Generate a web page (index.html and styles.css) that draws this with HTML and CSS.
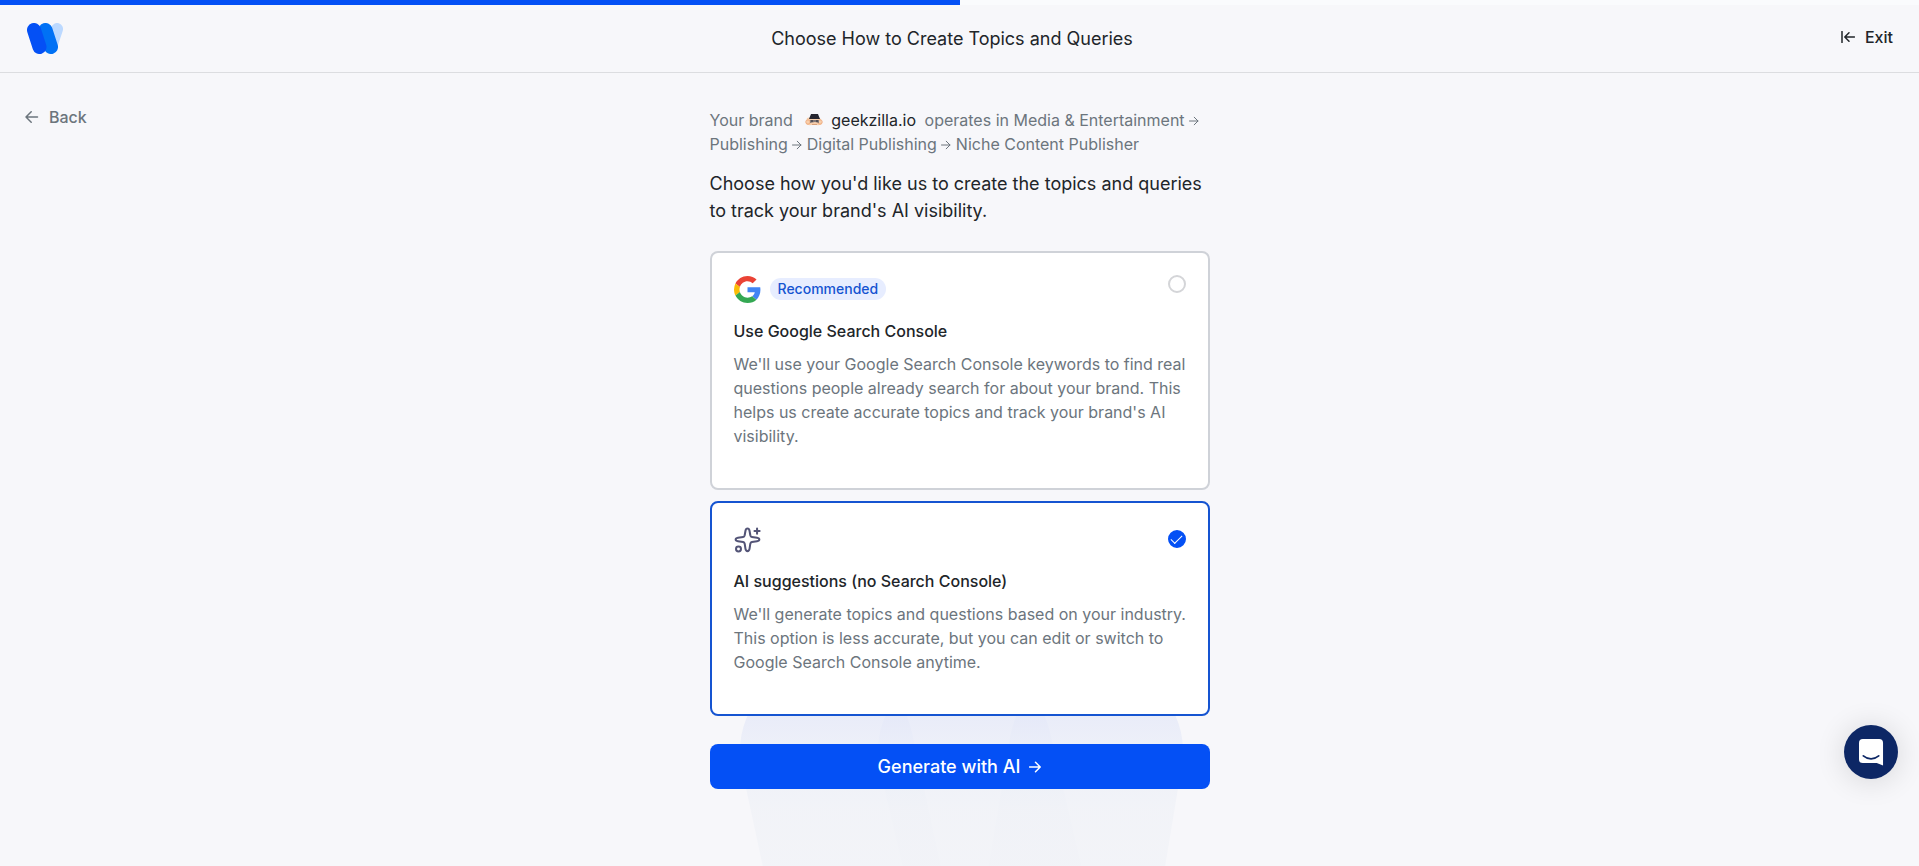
FILE: index.html
```html
<!DOCTYPE html>
<html lang="en">
<head>
<meta charset="utf-8">
<meta name="viewport" content="width=device-width, initial-scale=1">
<title>Choose How to Create Topics and Queries</title>
<link rel="stylesheet" href="styles.css">
</head>
<body>
<div class="progress"><div class="progress-fill" style="width: 50%"></div></div>
<header class="header">
  <svg class="logo" viewBox="0 0 36 31" aria-label="Logo" role="img">
    <path d="M30 6 24 24" stroke="#bcd9ff" stroke-width="12" stroke-linecap="round"/>
    <path d="M18.500 7 24 24" stroke="#0071f5" stroke-width="14" stroke-linecap="round"/>
    <path d="M7 7 12.500 24" stroke="#0450f5" stroke-width="14" stroke-linecap="round"/>
  </svg>
  <h1 class="title">Choose How to Create Topics and Queries</h1>
  <a class="exit" href="#exit">
    <svg class="exit-icon" viewBox="0 0 14 12"><path d="M1 .5v11M13.500 6H4M8 1.800 3.800 6 8 10.200"/></svg>
    Exit
  </a>
</header>
<main class="main">
  <a class="back" href="#back">
    <svg class="back-icon" viewBox="0 0 14 12"><path d="M12.500 6H1M6.200.8 1 6l5.200 5.200"/></svg>
    Back
  </a>
  <form class="content">
    <svg class="watermark" viewBox="0 0 448 386">
      <defs>
        <linearGradient id="fade" x1="0" y1="60" x2="0" y2="386" gradientUnits="userSpaceOnUse">
          <stop offset="0" stop-color="#e4e8f8"/><stop offset=".12" stop-color="#ebeef8"/><stop offset=".3" stop-color="#f0f2f7"/><stop offset="1" stop-color="#f4f5f8"/>
        </linearGradient>
      </defs>
      <g stroke="url(#fade)" stroke-linecap="round" stroke-width="174" stroke-opacity=".75">
        <path d="M360 98 310 400"/><path d="M229 98 300 400"/><path d="M91 98 156 400"/>
      </g>
    </svg>
    <p class="brand-line">Your brand
      <span class="brand"><svg class="favicon" viewBox="0 0 18 12">
        <path d="M2 4c3-1 11-1 14 1l1 4c0 3-5 2-8 2s-8 1-8-2z" fill="#f8cfac"/>
        <circle cx="3" cy="8" r="2.200" fill="none" stroke="#efaa7b"/><circle cx="15" cy="8" r="2.200" fill="none" stroke="#efaa7b"/>
        <path d="M6 0h7l2 5H4z" fill="#252530"/><path d="M5 6h9v3l-4-1-5 1z" fill="#837a7a"/><path d="M6 7h2m3 0h2" stroke="#282832"/><path d="M7 10.500h5" stroke="#d8a07b"/>
      </svg>geekzilla.io</span>
      operates in Media &amp; Entertainment <svg class="crumb" viewBox="0 0 10 10"><path d="M.5 5h8.500M5.200 1.200 9 5 5.200 8.800"/></svg> Publishing <svg class="crumb" viewBox="0 0 10 10"><path d="M.5 5h8.500M5.200 1.200 9 5 5.200 8.800"/></svg> Digital Publishing <svg class="crumb" viewBox="0 0 10 10"><path d="M.5 5h8.500M5.200 1.200 9 5 5.200 8.800"/></svg> Niche Content Publisher</p>
    <p class="lead">Choose how you'd like us to create the topics and queries to track your brand's AI visibility.</p>

    <label class="card">
      <span class="card-top">
        <svg class="card-icon" viewBox="0 0 48 48">
          <path fill="#ea4335" d="M24 9.500c3.540 0 6.710 1.220 9.210 3.600l6.850-6.850C35.900 2.380 30.470 0 24 0 14.620 0 6.510 5.380 2.560 13.220l7.980 6.190C12.430 13.720 17.740 9.500 24 9.500z"/>
          <path fill="#4285f4" d="M46.980 24.550c0-1.570-.15-3.090-.38-4.550H24v9.020h12.940c-.58 2.960-2.260 5.480-4.780 7.180l7.730 6c4.510-4.180 7.090-10.360 7.090-17.650z"/>
          <path fill="#fbbc05" d="M10.530 28.590A14.500 14.500 0 0 1 9.770 24c0-1.600.27-3.140.76-4.590l-7.980-6.190A23.900 23.900 0 0 0 0 24c0 3.880.92 7.540 2.560 10.780z"/>
          <path fill="#34a853" d="M24 48c6.480 0 11.930-2.130 15.890-5.810l-7.730-6c-2.150 1.450-4.920 2.300-8.160 2.300-6.260 0-11.570-4.220-13.470-9.910l-7.980 6.190C6.510 42.620 14.620 48 24 48z"/>
        </svg>
        <span class="badge">Recommended</span>
        <input class="radio radio-top" type="radio" name="source" value="gsc">
      </span>
      <span class="card-title">Use Google Search Console</span>
      <span class="card-text">We'll use your Google Search Console keywords to find real questions people already search for about your brand. This helps us create accurate topics and track your brand's AI visibility.</span>
    </label>

    <label class="card">
      <span class="card-top">
        <svg class="card-icon sparkles" viewBox="0 0 24 24">
          <path d="M10.200 4.200c.5-2.700 3.100-2.700 3.600 0l.7 4c.2.900.7 1.400 1.400 1.500l4.600.8c2.700.5 2.700 2.500 0 3l-4.600.8c-.7.200-1.200.7-1.400 1.400l-.7 4.600c-.5 2.700-3.100 2.700-3.600 0l-.7-4.600c-.2-.7-.7-1.200-1.400-1.400l-4.600-.8c-2.700-.5-2.700-2.500 0-3l4.600-.8c.7-.1 1.200-.6 1.400-1.500z"/>
          <path d="M20.500 2.200v4.600M18.200 4.500h4.600"/><circle cx="4" cy="20.500" r="2.200"/>
        </svg>
        <input class="radio" type="radio" name="source" value="ai" checked>
      </span>
      <span class="card-title">AI suggestions (no Search Console)</span>
      <span class="card-text">We'll generate topics and questions based on your industry. This option is less accurate, but you can edit or switch to Google Search Console anytime.</span>
    </label>

    <button class="submit" type="button">Generate with AI
      <svg class="submit-icon" viewBox="0 0 12 12"><path d="M.5 6H11M6.500 1.300 11.200 6l-4.700 4.700"/></svg>
    </button>
  </form>
</main>
<button class="chat" type="button" aria-label="Open chat">
  <svg class="chat-icon" viewBox="0 0 26 28"><path d="M4 0h17a4 4 0 0 1 4 4v23.500L18.500 25H4a4 4 0 0 1-4-4V4a4 4 0 0 1 4-4z" fill="#fff"/><path d="M4.500 17.500c5 4 11 4 16 0" fill="none" stroke="#0d2765" stroke-width="1.800" stroke-linecap="round"/></svg>
</button>
</body>
</html>
```
FILE: styles.css
```css
* { box-sizing: border-box; }
body {
  margin: 0;
  min-height: 100vh;
  display: flex;
  flex-direction: column;
  background: #f7f7fa;
  color: #212529;
  font-family: Inter, "Liberation Sans", sans-serif;
  font-size: 16px;
  line-height: 24px;
  overflow-x: hidden;
}
svg { fill: none; flex: none; }
a { color: inherit; text-decoration: none; }
p, h1 { margin: 0; font-weight: 400; }

.progress { height: 5px; background: #fafbfd; }
.progress-fill { height: 100%; background: #0450f5; }
.header {
  display: flex;
  align-items: center;
  justify-content: space-between;
  height: 68px;
  padding: 0 26px 0 27px;
  border-bottom: 1px solid #dcdde0;
}
.logo { width: 36px; height: 31px; }
.title { font-size: 18px; line-height: 27px; }
.exit, .back { display: flex; align-items: center; gap: 10px; }
.exit { font-weight: 500; padding-bottom: 3px; }
.exit-icon, .back-icon { width: 14px; height: 12px; stroke: currentColor; stroke-width: 1.500; stroke-linecap: round; stroke-linejoin: round; }

.main {
  flex: 1;
  display: grid;
  grid-template-columns: 1fr minmax(0, 500px) 1fr;
  align-items: start;
  overflow: hidden;
}
.back { justify-self: start; margin: 32px 0 0 25px; color: #6c757d; font-weight: 500; }
.content { position: relative; display: flex; flex-direction: column; padding-top: 35px; }
.watermark { position: absolute; z-index: -1; top: 580px; left: 26px; width: 448px; }
.brand-line, .card-text { color: #6c757d; }
.brand { display: inline-flex; align-items: center; gap: 8px; margin: 0 4px 0 8px; color: #212529; }
.favicon { width: 18px; height: 12px; }
.crumb { width: 10px; height: 10px; stroke: currentColor; stroke-linecap: round; stroke-linejoin: round; }
.lead { margin: 14px 0 27px; font-size: 18px; line-height: 27px; }

.card {
  display: flex;
  flex-direction: column;
  padding: 22px 22px 40px;
  margin-bottom: 11px;
  border: 2px solid #cfd2d8;
  border-radius: 8px;
  background: #fff;
}
.card:has(.radio:checked) { border-color: #1554d1; margin-bottom: 28px; }
.card-top { display: flex; align-items: center; gap: 9px; height: 28px; margin-bottom: 16px; }
.card-icon { width: 27px; height: 27px; }
.sparkles { stroke: #535477; stroke-width: 1.800; stroke-linecap: round; }
.badge { padding: 0 8px; border-radius: 11px; background: #e7edff; color: #1554d1; font-size: 14px; line-height: 22px; font-weight: 500; }
.radio {
  appearance: none;
  width: 18px;
  height: 18px;
  margin: 0 0 0 auto;
  border: 2px solid #d4d5d8;
  border-radius: 50%;
}
.radio-top { align-self: flex-start; }
.radio:checked { display: grid; place-items: center; border-color: #0450f5; background: #0450f5; }
.radio:checked::after { content: ""; width: 10px; height: 5px; border: solid #fff; border-width: 0 0 1px 1px; transform: translateY(-1px) rotate(-45deg); }
.card-title { margin-bottom: 9px; font-weight: 500; }
.card-text { margin-right: -12px; }
.submit {
  display: flex;
  align-items: center;
  justify-content: center;
  gap: 9px;
  padding: 9px;
  border: 0;
  border-radius: 8px;
  background: #0450f5;
  color: #fff;
  font: 500 18px/27px Inter, "Liberation Sans", sans-serif;
}
.submit-icon { width: 12px; height: 12px; stroke: currentColor; stroke-width: 1.500; stroke-linecap: round; stroke-linejoin: round; }
.chat {
  position: fixed;
  right: 21px;
  bottom: 87px;
  display: grid;
  place-items: center;
  width: 54px;
  height: 54px;
  padding: 0;
  border: 0;
  border-radius: 50%;
  background: #0d2765;
  box-shadow: 0 2px 30px rgba(0, 0, 0, .14);
}
.chat-icon { width: 25px; height: 27px; }
```
